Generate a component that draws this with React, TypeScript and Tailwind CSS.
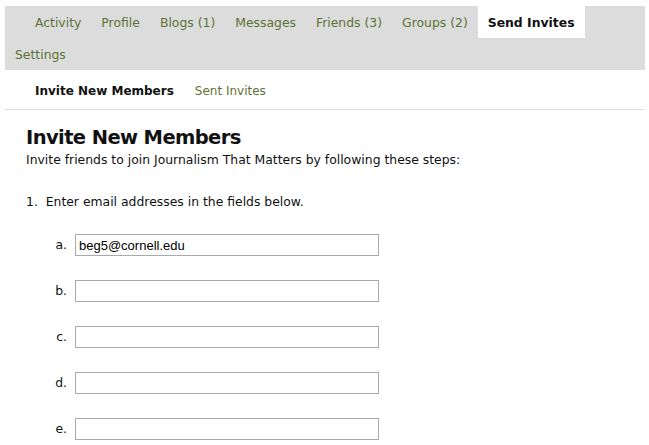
const tabs = [
  { label: "Activity" },
  { label: "Profile" },
  { label: "Blogs (1)" },
  { label: "Messages" },
  { label: "Friends (3)" },
  { label: "Groups (2)" },
  { label: "Send Invites", active: true },
  { label: "Settings" },
];

const letters = ["a", "b", "c", "d", "e"];

export default function App() {
  return (
    <div className="min-h-screen bg-white pt-[6px] font-['DejaVu_Sans',Verdana,sans-serif] text-[12.4px] text-[#111]">
      {/* main tabs */}
      <div className="mx-[5px] w-[640px] bg-[#dcdcdc]">
        <ul className="flex flex-wrap">
          <li className="w-[20px]" />
          {tabs.map((t) => (
            <li
              key={t.label}
              className={
                t.active
                  ? "h-[32px] bg-white px-[10px] leading-[33px] font-bold text-[#111]"
                  : "h-[32px] px-[10px] leading-[33px] text-[#5e7235]"
              }
            >
              {t.label}
            </li>
          ))}
        </ul>
      </div>

      {/* sub tabs */}
      <div className="mx-[5px] flex h-[40px] w-[640px] items-center gap-[21px] border-b border-[#dcdcdc] pl-[30px] pt-[2px] text-[12px]">
        <span className="font-bold text-[#111]">Invite New Members</span>
        <span className="text-[#5e7235]">Sent Invites</span>
      </div>

      <div className="pl-[26px] pt-[17px]">
        <h2 className="text-[19.5px] font-bold leading-[22px] tracking-[-0.6px] text-[#111]">Invite New Members</h2>
        <p className="mt-[3px] leading-[16px]">Invite friends to join Journalism That Matters by following these steps:</p>

        <p className="mt-[26px] leading-[16px]">1.&nbsp; Enter email addresses in the fields below.</p>

        <div className="mt-[24px] flex flex-col gap-[24px]">
          {letters.map((l, i) => (
            <div key={l} className="flex items-center">
              <span className="w-[49px] pr-[8px] text-right">{l}.</span>
              <input
                type="text"
                defaultValue={i === 0 ? "beg5@cornell.edu" : ""}
                className="h-[22px] w-[304px] border border-[#aaaaaa] px-[3px] font-['Liberation_Sans',Arial,sans-serif] text-[13px] text-black outline-none"
              />
            </div>
          ))}
        </div>
      </div>
    </div>
  );
}
